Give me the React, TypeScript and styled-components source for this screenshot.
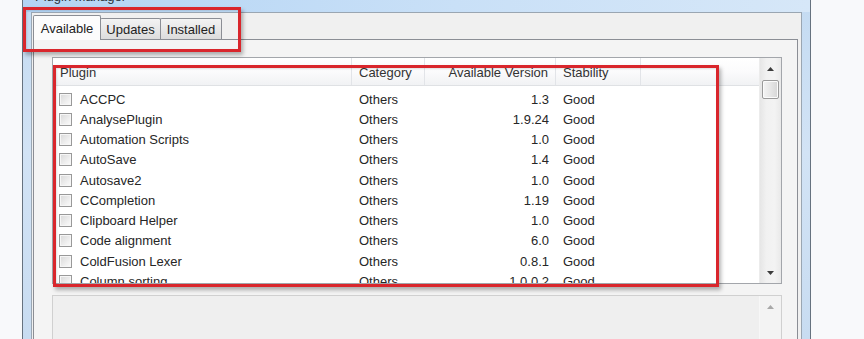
import React from "react";
import styled, { createGlobalStyle } from "styled-components";

const Global = createGlobalStyle`
  html, body { margin: 0; padding: 0; background: #f7f8fa; }
  body { font-family: "Liberation Sans", Arial, sans-serif; }
  * { box-sizing: border-box; }
`;

const Page = styled.div`
  position: relative;
  width: 864px;
  height: 339px;
  overflow: hidden;
  display: flex;
  background: #f7f8fa;
`;

const Gutter = styled.div<{ $w?: number }>`
  flex: ${(p) => (p.$w ? `0 0 ${p.$w}px` : "1 1 auto")};
  background: #f8f9fb;
`;

const Window = styled.div`
  flex: 0 0 789px;
  display: flex;
  flex-direction: column;
  border-left: 1px solid #66727f;
  border-right: 1px solid #66727f;
  padding: 0 8px;
  background: linear-gradient(to bottom, #c4dbf2, #d2e3f5 45%, #c8dcf1);
`;

const TitleBar = styled.div`
  height: 12px;
  margin: 0 -8px;
  padding-left: 12px;
  overflow: hidden;
  display: flex;
  align-items: flex-end;
  background: linear-gradient(90deg, #b3d4f4, #c9e0f7 55%, #d6e7f8);
`;

const Title = styled.span`
  font-size: 13px;
  line-height: 14px;
  margin-bottom: 8px;
  color: #2a2f36;
`;

const Client = styled.div`
  flex: 1;
  display: flex;
  flex-direction: column;
  background: #f0f0f0;
  border: 1px solid #9aa6b2;
  border-bottom: none;
  padding: 0 3px 0 1px;
`;

const TabStrip = styled.div`
  height: 26px;
  display: flex;
  align-items: flex-end;
`;

const Tab = styled.div<{ $w: number; $active?: boolean }>`
  width: ${(p) => p.$w}px;
  height: ${(p) => (p.$active ? 25 : 21)}px;
  margin-bottom: ${(p) => (p.$active ? -1 : 0)}px;
  margin-left: ${(p) => (p.$active ? 0 : -1)}px;
  position: relative;
  z-index: ${(p) => (p.$active ? 2 : 1)};
  border: 1px solid #8b8e95;
  border-bottom: none;
  border-radius: 2px 2px 0 0;
  background: ${(p) =>
    p.$active
      ? "#fcfcfc"
      : "linear-gradient(to bottom, #f3f3f3, #e8e8e8 50%, #dcdcdc)"};
  display: flex;
  align-items: center;
  justify-content: center;
  padding-top: ${(p) => (p.$active ? 0 : 1)}px;
  font-size: 13px;
  color: #222;
`;

const TabPanel = styled.div`
  flex: 1;
  display: flex;
  flex-direction: column;
  border: 1px solid #8b8e95;
  border-bottom: none;
  background: #f4f4f4;
  padding: 17px 15px 0 18px;
`;

const ListView = styled.div`
  height: 227px;
  display: flex;
  border: 1px solid #a3a6ab;
  background: #fff;
  overflow: hidden;
`;

const ListBody = styled.div`
  flex: 1;
  display: flex;
  flex-direction: column;
  overflow: hidden;
`;

const cols = "299px 73px 131px 85px 1fr";

const Header = styled.div`
  flex: 0 0 28px;
  display: grid;
  grid-template-columns: ${cols};
  background: linear-gradient(to bottom, #ffffff, #fbfbfc 50%, #f1f2f4);
  border-bottom: 1px solid #dfe1e4;
`;

const HeadCell = styled.div<{ $right?: boolean }>`
  display: flex;
  align-items: center;
  justify-content: ${(p) => (p.$right ? "flex-end" : "flex-start")};
  padding: 2px 7px 0 7px;
  border-right: 1px solid #e2e4e8;
  font-size: 13px;
  color: #333;
  white-space: nowrap;
`;

const HeadFiller = styled.div``;

const Rows = styled.div`
  padding-top: 3px;
`;

const Row = styled.div`
  height: 20.25px;
  display: grid;
  grid-template-columns: ${cols};
  align-items: center;
  font-size: 13px;
  color: #262626;
  white-space: nowrap;
`;

const NameCell = styled.div`
  display: flex;
  align-items: center;
  gap: 8px;
  padding-left: 6px;
`;

const Check = styled.span`
  width: 13px;
  height: 13px;
  border: 1px solid #999;
  background: linear-gradient(135deg, #d8d8d8, #f2f2f2 70%, #fbfbfb);
  box-shadow: inset 0 0 0 1px #f6f6f6;
`;

const Cell = styled.div<{ $right?: boolean }>`
  padding: 0 7px;
  text-align: ${(p) => (p.$right ? "right" : "left")};
`;

const ScrollBar = styled.div<{ $disabled?: boolean }>`
  flex: 0 0 22px;
  display: flex;
  flex-direction: column;
  align-items: center;
  background: ${(p) =>
    p.$disabled
      ? "#f3f3f3"
      : "linear-gradient(90deg, #e6e6e6, #f1f1f1 30%, #f3f3f3 70%, #e9e9e9)"};
  border-left: 1px solid ${(p) => (p.$disabled ? "#f7f7f7" : "#ececec")};
`;

const ArrowBtn = styled.div`
  flex: 0 0 21px;
  width: 100%;
  display: flex;
  align-items: center;
  justify-content: center;
`;

const Thumb = styled.div`
  width: 17px;
  height: 19px;
  margin-top: 1px;
  border: 1px solid #9a9a9a;
  border-radius: 2px;
  background: linear-gradient(90deg, #f4f4f4, #e6e6e6 50%, #d6d6d6);
  box-shadow: inset 0 0 0 1px #fbfbfb;
`;

const Track = styled.div`
  flex: 1;
`;

const Arrow = ({ up, color }: { up?: boolean; color: string }) => (
  <svg width="7" height="4" viewBox="0 0 7 4">
    {up ? (
      <polygon points="0,4 7,4 3.5,0" fill={color} />
    ) : (
      <polygon points="0,0 7,0 3.5,4" fill={color} />
    )}
  </svg>
);

const InfoBox = styled.div`
  margin-top: 11px;
  flex: 1;
  display: flex;
  border: 1px solid #d0d0d0;
  border-bottom: none;
  background: #efefef;
`;

const InfoText = styled.div`
  flex: 1;
`;

const Highlight = styled.div<{ $x: number; $y: number; $w: number; $h: number }>`
  position: absolute;
  left: ${(p) => p.$x}px;
  top: ${(p) => p.$y}px;
  width: ${(p) => p.$w}px;
  height: ${(p) => p.$h}px;
  border: 3px solid #d9262c;
  box-shadow: 2px 3px 4px rgba(0, 0, 0, 0.3), inset 1px 1px 2px rgba(0, 0, 0, 0.12);
  pointer-events: none;
  z-index: 10;
`;

const plugins: [string, string, string, string][] = [
  ["ACCPC", "Others", "1.3", "Good"],
  ["AnalysePlugin", "Others", "1.9.24", "Good"],
  ["Automation Scripts", "Others", "1.0", "Good"],
  ["AutoSave", "Others", "1.4", "Good"],
  ["Autosave2", "Others", "1.0", "Good"],
  ["CCompletion", "Others", "1.19", "Good"],
  ["Clipboard Helper", "Others", "1.0", "Good"],
  ["Code alignment", "Others", "6.0", "Good"],
  ["ColdFusion Lexer", "Others", "0.8.1", "Good"],
  ["Column sorting", "Others", "1.0.0.2", "Good"],
];

export default function App() {
  return (
    <>
      <Global />
      <Page>
        <Gutter $w={22} />
        <Window>
          <TitleBar>
            <Title>Plugin Manager</Title>
          </TitleBar>
          <Client>
            <TabStrip>
              <Tab $w={68} $active>
                Available
              </Tab>
              <Tab $w={61}>Updates</Tab>
              <Tab $w={62}>Installed</Tab>
            </TabStrip>
            <TabPanel>
              <ListView>
                <ListBody>
                  <Header>
                    <HeadCell>Plugin</HeadCell>
                    <HeadCell>Category</HeadCell>
                    <HeadCell $right>Available Version</HeadCell>
                    <HeadCell>Stability</HeadCell>
                    <HeadFiller />
                  </Header>
                  <Rows>
                    {plugins.map(([name, cat, ver, stab]) => (
                      <Row key={name}>
                        <NameCell>
                          <Check />
                          {name}
                        </NameCell>
                        <Cell>{cat}</Cell>
                        <Cell $right>{ver}</Cell>
                        <Cell>{stab}</Cell>
                      </Row>
                    ))}
                  </Rows>
                </ListBody>
                <ScrollBar>
                  <ArrowBtn>
                    <Arrow up color="#3c3c3c" />
                  </ArrowBtn>
                  <Thumb />
                  <Track />
                  <ArrowBtn>
                    <Arrow color="#3c3c3c" />
                  </ArrowBtn>
                </ScrollBar>
              </ListView>
              <InfoBox>
                <InfoText />
                <ScrollBar $disabled>
                  <ArrowBtn>
                    <Arrow up color="#a8a8a8" />
                  </ArrowBtn>
                </ScrollBar>
              </InfoBox>
            </TabPanel>
          </Client>
        </Window>
        <Gutter />
        <Highlight $x={23} $y={7} $w={218} $h={45} />
        <Highlight $x={53} $y={65} $w={666} $h={222} />
      </Page>
    </>
  );
}
